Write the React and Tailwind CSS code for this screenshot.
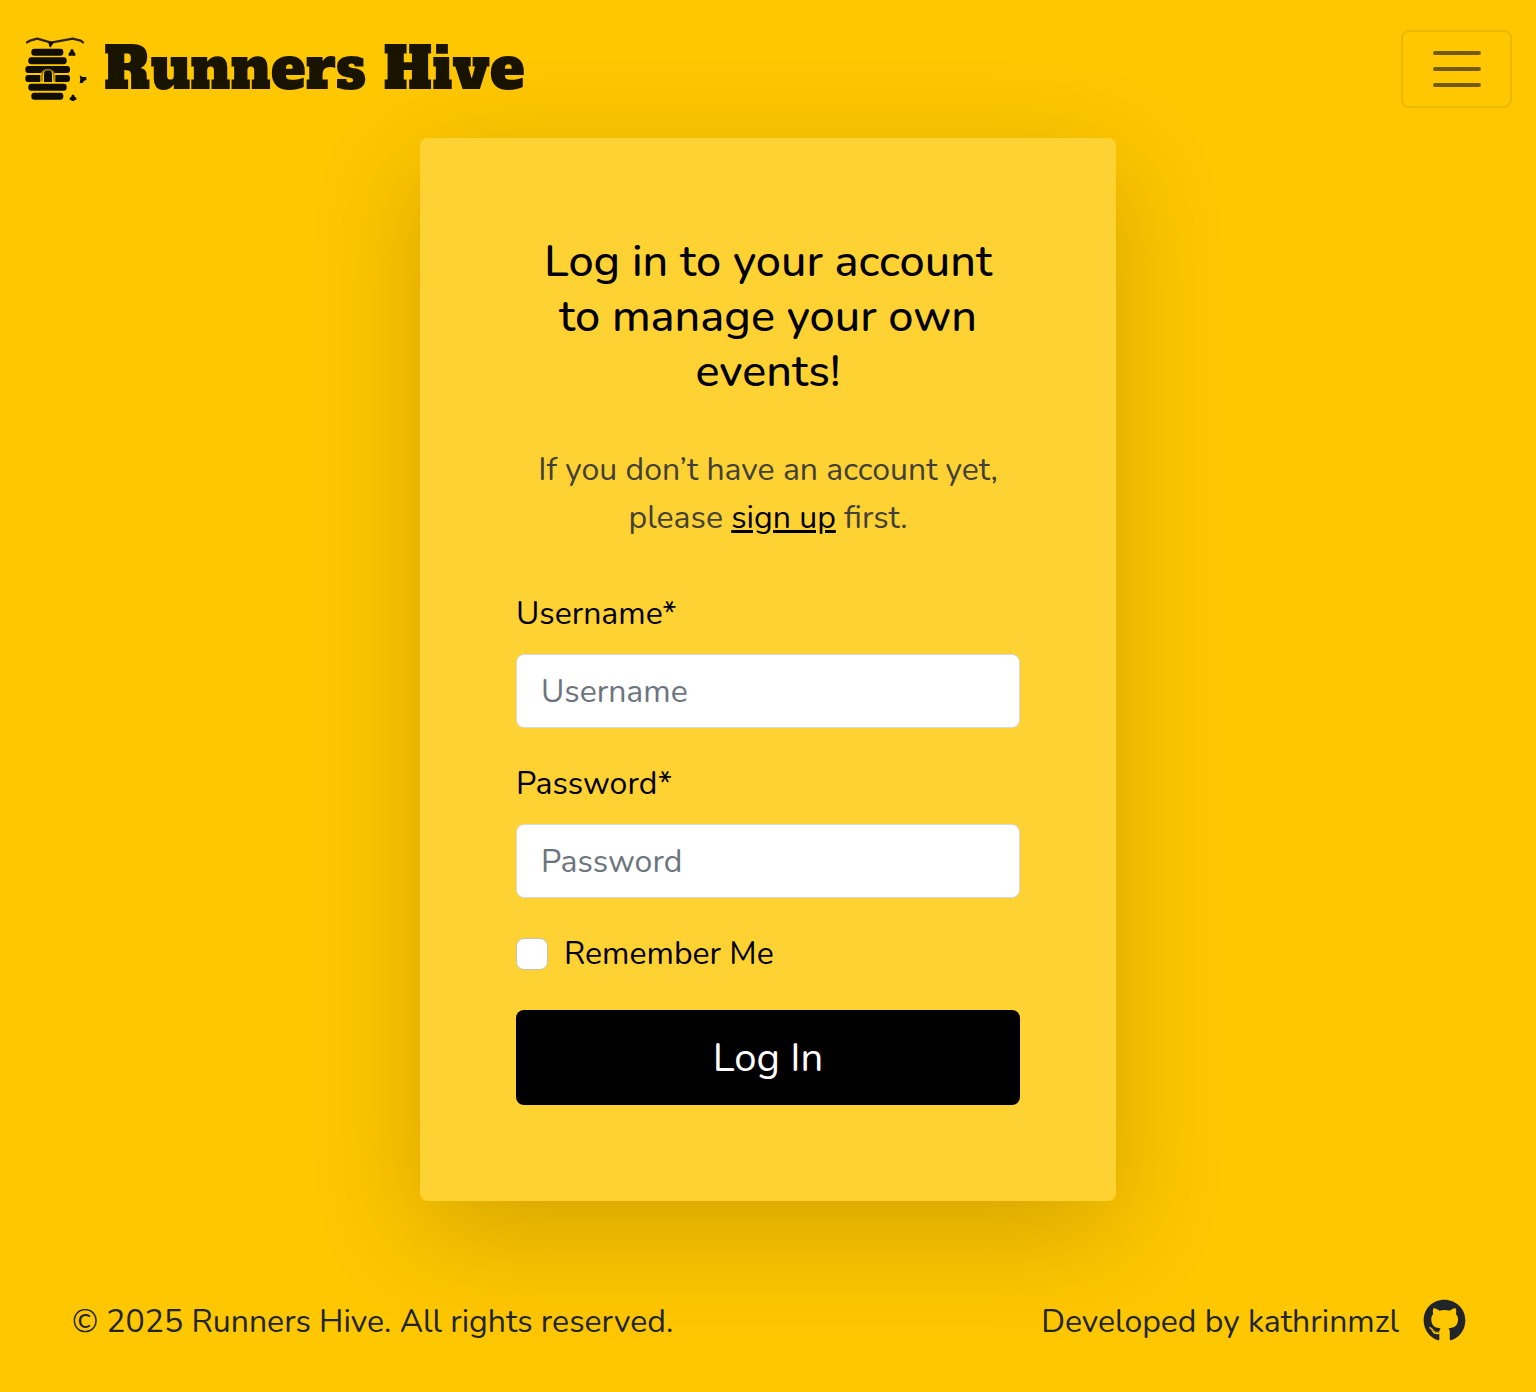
import { FaGithub } from "react-icons/fa";

function HiveLogo() {
  return (
    <svg viewBox="42 51 192 192" className="size-16 shrink-0" fill="#0f0c00" aria-hidden="true">
      <path
        d="M51 67 L60 62 L82 56 L123 68 L188 56 L212 62 L219 67 M123 68 L121 78"
        fill="none"
        stroke="#2e2500"
        strokeWidth="7"
        strokeLinecap="round"
        strokeLinejoin="round"
      />
      <path d="M115 65h17l-5 9-5 5-5-3z" />
      <rect x="64" y="86" width="96" height="21" rx="9" />
      <rect x="55" y="112" width="115" height="21" rx="9" />
      <rect x="46" y="138" width="134" height="21" rx="9" />
      <rect x="46" y="165" width="134" height="21" rx="9" />
      <rect x="55" y="191" width="115" height="21" rx="9" />
      <rect x="64" y="218" width="96" height="21" rx="9" />
      <path d="M91 187V166a23 23 0 0 1 45 0v21z" fill="#ffc700" />
      <path d="M96 184V166a18 18 0 0 1 36 0v18" fill="none" stroke="#8a6c00" strokeWidth="4" />
      <path d="M102 186V163a12 12 0 0 1 24 0v23z" />
      <path d="M183 88h6l3 8 4 4v7l-7 1-3-2-3 2-7-1v-7l4-4z" />
      <path d="M209 166l8 5h12v9l-7 2-3 6-4 1-6 1 2-13z" />
      <path d="M186 224h6l2 6 5 3v6l-6 2-2 4h-4l-3-4-5-2v-6l5-3z" />
    </svg>
  );
}

function Field({ id, label, type, autoComplete }) {
  return (
    <div className="mb-8 flex flex-col">
      <label htmlFor={id} className="mb-4 leading-[48px]">
        {label}*
      </label>
      <input
        id={id}
        type={type}
        placeholder={label}
        autoComplete={autoComplete}
        className="h-[74px] w-full rounded-lg border border-[#d4d9dd] bg-white px-6 text-[#212529] placeholder:text-[#6c757d]"
      />
    </div>
  );
}

export default function App() {
  return (
    <div className="flex min-h-screen flex-col bg-[#ffc700] font-['Nunito','Lato',sans-serif] text-[32px] text-black">
      <header className="flex h-[138px] items-center justify-between px-6">
        <a
          href="#"
          className="flex items-center gap-4 font-['Alfa_Slab_One','DejaVu_Serif_Condensed',serif] text-[58px] leading-[80px] font-normal text-[#191400]"
        >
          <HiveLogo />
          Runners Hive
        </a>
        <button
          type="button"
          aria-label="Toggle navigation"
          className="flex h-[78px] w-[111px] items-center justify-center rounded-lg border-2 border-[#ebb800]"
        >
          <svg viewBox="0 0 30 30" className="size-[60px]" fill="none" stroke="#735a00" strokeWidth="2" strokeLinecap="round" aria-hidden="true">
            <path d="M4 7h22M4 15h22M4 23h22" />
          </svg>
        </button>
      </header>

      <main className="mx-auto w-full max-w-[696px] rounded-lg bg-[#ffd233] p-24 shadow-[0_32px_112px_rgba(0,0,0,0.18)]">
        <h1 className="mb-[47px] px-4 text-center text-[45px] leading-[55px] font-medium">
          Log in to your account to manage your own events!
        </h1>
        <p className="mb-12 text-center leading-[48px] text-[#424038]">
          If you don’t have an account yet, please{" "}
          <a href="#signup" className="text-black underline">
            sign up
          </a>{" "}
          first.
        </p>
        <form onSubmit={(e) => e.preventDefault()}>
          <Field id="username" label="Username" type="text" autoComplete="username" />
          <Field id="password" label="Password" type="password" autoComplete="current-password" />
          <div className="mb-8 flex items-center gap-4">
            <input
              id="remember"
              type="checkbox"
              className="size-8 appearance-none rounded-lg border border-[#c5c1b0] bg-white checked:bg-black"
            />
            <label htmlFor="remember" className="leading-[48px]">
              Remember Me
            </label>
          </div>
          <button type="submit" className="h-[95px] w-full rounded-lg bg-black text-[40px] text-white">
            Log In
          </button>
        </form>
      </main>

      <footer className="mt-[97px] flex items-center justify-between pr-[70px] pl-[72px] leading-[48px] text-[#212529]">
        <p>© 2025 Runners Hive. All rights reserved.</p>
        <div className="flex items-center gap-6">
          <span>Developed by kathrinmzl</span>
          <a href="#github" aria-label="GitHub profile" className="pb-1">
            <FaGithub className="size-[43px]" />
          </a>
        </div>
      </footer>
    </div>
  );
}
